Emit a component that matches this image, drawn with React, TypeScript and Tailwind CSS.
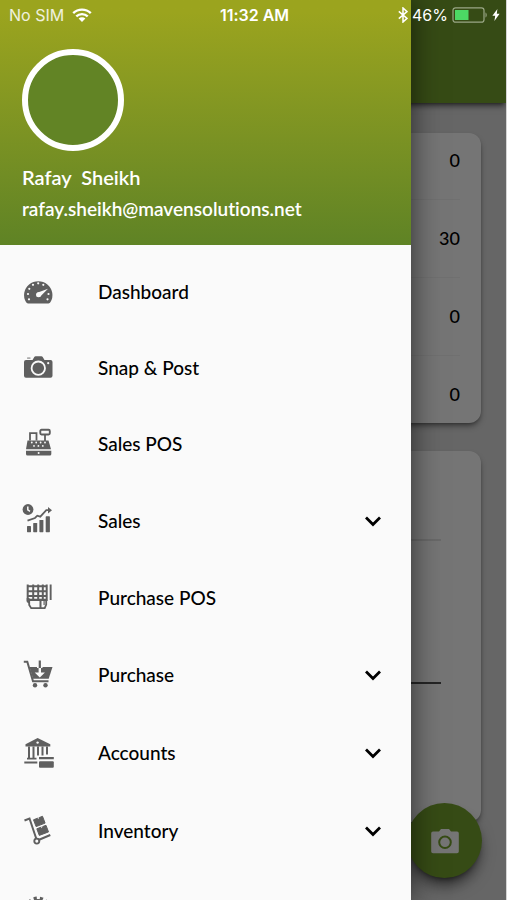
import { ChevronDown } from "lucide-react";
import type { ReactNode } from "react";

const stats = [0, 30, 0, 0];

const menu = [
  { label: "Dashboard", icon: <DashboardIcon /> },
  { label: "Snap & Post", icon: <CameraIcon /> },
  { label: "Sales POS", icon: <RegisterIcon /> },
  { label: "Sales", icon: <SalesIcon />, expandable: true },
  { label: "Purchase POS", icon: <TerminalIcon /> },
  { label: "Purchase", icon: <CartIcon />, expandable: true },
  { label: "Accounts", icon: <BankIcon />, expandable: true },
  { label: "Inventory", icon: <TrolleyIcon />, expandable: true },
];

export default function App() {
  return (
    <div className="relative h-screen overflow-hidden border-r border-neutral-300 bg-[#dedede] font-['Lato','Liberation_Sans',sans-serif] text-black [font-variant-ligatures:none]">
      <Home />
      <div className="absolute inset-0 bg-black/54" />
      <Drawer />
      <StatusBar />
    </div>
  );
}

function StatusBar() {
  return (
    <div className="absolute inset-x-0 top-0 flex h-[30px] items-center pr-1.5 pl-[9px] font-['Inter','Liberation_Sans',sans-serif] text-base text-white">
      <div className="flex flex-1 items-center gap-2 text-white/85">
        <span>No SIM</span>
        <svg viewBox="0 0 20 14" className="h-3.5 w-5" fill="none" stroke="#fff" strokeWidth="2.4">
          <path d="M1.2 5.2a12.6 12.6 0 0 1 17.6 0" />
          <path d="M4.3 8.4a8.2 8.2 0 0 1 11.4 0" />
          <path d="M10 14 6.6 10.6a4.9 4.9 0 0 1 6.8 0z" fill="#fff" stroke="none" />
        </svg>
      </div>
      <span className="font-semibold">11:32 AM</span>
      <div className="flex flex-1 items-center justify-end gap-1">
        <svg viewBox="0 0 10 16" className="h-4 w-2.5" fill="none" stroke="#fff" strokeWidth="1.5">
          <path d="M.8 4.4 9 11.4 5 15V1l4 3.6-8.2 7" />
        </svg>
        <span>46%</span>
        <svg viewBox="0 0 36 16" className="h-4 w-9">
          <rect x="1" y=".8" width="31" height="14.4" rx="2.5" fill="none" stroke="#9aa786" strokeWidth="1.2" />
          <rect x="3" y="3" width="13.5" height="10" fill="#4cd964" />
          <path d="M33.5 5.5c1.6.6 1.6 4.4 0 5z" fill="#9aa786" />
        </svg>
        <svg viewBox="0 0 8 12" className="h-3 w-2">
          <path d="M5.4 0 .4 6.8h2.8L2.4 12l5.2-7.2H4.8z" fill="#fff" />
        </svg>
      </div>
    </div>
  );
}

function Home() {
  return (
    <div className="flex h-full flex-col">
      <header className="h-[103px] shrink-0 bg-[#76a42e] shadow-md shadow-black/50" />
      <main className="flex flex-1 flex-col gap-7 px-[25px] pt-[30px] pb-[78px]">
        <ul className="rounded-xl bg-white px-[21px] shadow-md shadow-black/40">
          {stats.map((value, i) => (
            <li
              key={i}
              className="flex h-[78px] items-end justify-end border-b border-neutral-100 pb-[27px] text-lg/6 font-medium first:h-[67px] last:h-[67px] last:border-0 last:pb-[17px]"
            >
              {value}
            </li>
          ))}
        </ul>
        <section className="flex-1 rounded-xl bg-white px-10 shadow-md shadow-black/40">
          <div className="h-[90px] border-b-2 border-neutral-200" />
          <div className="h-[143px] border-b-2 border-neutral-600" />
        </section>
      </main>
      <button
        aria-label="Snap a receipt"
        className="absolute right-6 bottom-[22px] flex size-[75px] items-center justify-center rounded-full bg-[#76a42e] shadow-lg shadow-black/60"
      >
        <svg viewBox="0 0 28 26" className="h-[26px] w-7">
          <path
            d="M2 3.5h6L10 1h8l2 2.5h6a1.8 1.8 0 0 1 1.8 1.8v18.2a1.8 1.8 0 0 1-1.8 1.8H2A1.8 1.8 0 0 1 .2 23.5V5.3A1.8 1.8 0 0 1 2 3.5z"
            fill="#fff"
          />
          <circle cx="14" cy="14.3" r="5.8" fill="none" stroke="#76a42e" strokeWidth="2" />
        </svg>
      </button>
    </div>
  );
}

function Drawer() {
  return (
    <aside className="absolute inset-y-0 left-0 flex w-[calc(100%-95px)] flex-col bg-[#fafafa] shadow-[0_0_28px_rgba(0,0,0,0.6)]">
      <div className="bg-linear-to-b from-[#9ba41e] from-5% to-[#5f8325] px-[22px] pt-[49px] pb-5 font-semibold text-white">
        <div className="mb-2.5 size-[102px] rounded-full border-[6px] border-white bg-[#628425]" />
        <p className="text-xl/8 whitespace-pre">Rafay  Sheikh</p>
        <p className="text-[19px]/8">rafay.sheikh@mavensolutions.net</p>
      </div>
      <nav className="min-h-0 flex-1 overflow-hidden pt-[9px]">
        {menu.map((item) =>
          item.expandable ? (
            <button
              key={item.label}
              aria-expanded="false"
              className="flex h-[78px] w-full items-center gap-11 pr-6 pl-[22px] text-left text-[19px] font-medium"
            >
              {item.icon}
              <span className="flex-1">{item.label}</span>
              <ChevronDown size={28} strokeWidth={2.4} strokeLinecap="butt" strokeLinejoin="miter" />
            </button>
          ) : (
            <a key={item.label} href="#" className="flex h-[76px] items-center gap-11 pl-[22px] text-[19px] font-medium">
              {item.icon}
              <span>{item.label}</span>
            </a>
          ),
        )}
        <a href="#" aria-label="Settings" className="flex h-20 items-center pl-[22px]">
          <GearIcon />
        </a>
      </nav>
    </aside>
  );
}

function Icon({ children }: { children: ReactNode }) {
  return (
    <svg viewBox="0 0 32 32" className="size-8 shrink-0 overflow-visible" fill="#5f5f5f">
      {children}
    </svg>
  );
}

function DashboardIcon() {
  return (
    <Icon>
      <path d="M6 27.500a3 3 0 0 1-2-1.500A14.200 13.800 0 1 1 28.500 26 3 3 0 0 1 26.500 27.500z" />
      <g fill="#fafafa">
        <circle cx="6" cy="18" r="1.1" />
        <circle cx="7" cy="23.3" r="1.1" />
        <circle cx="7.3" cy="12.8" r="1.1" />
        <circle cx="11" cy="8.8" r="1.1" />
        <circle cx="16.2" cy="7.3" r="1.1" />
        <circle cx="21.3" cy="8.8" r="1.1" />
        <circle cx="26.5" cy="18" r="1.1" />
        <circle cx="25.5" cy="23.3" r="1.1" />
        <circle cx="16.5" cy="18.8" r="2.5" />
        <path d="M26 12.7 17.8 21 15.2 16.8z" />
      </g>
    </Icon>
  );
}

function CameraIcon() {
  return (
    <Icon>
      <path d="M4 8h6.5l1.8-3a1.5 1.5 0 0 1 1.3-.8h5.8a1.5 1.5 0 0 1 1.3.8l1.8 3h6a2 2 0 0 1 2 2v13.8a2 2 0 0 1-2 2H4a2 2 0 0 1-2-2V10a2 2 0 0 1 2-2z" />
      <rect x="5" y="5.3" width="3.6" height="1.6" rx=".6" fill="#aaa" />
      <circle cx="16.3" cy="16.2" r="6.7" fill="none" stroke="#fafafa" strokeWidth="1.8" />
      <circle cx="26.2" cy="11.2" r="1.1" fill="#fafafa" />
    </Icon>
  );
}

function RegisterIcon() {
  return (
    <Icon>
      <path d="M5.5 12.5h21l2.5 8.7H4z" />
      <path d="M4 22.8h25.3V26a1.5 1.5 0 0 1-1.5 1.5H5.5A1.5 1.5 0 0 1 4 26z" />
      <path d="M8 12.5V5.2h6.5v7.3M23 6.5V13" fill="none" stroke="#5f5f5f" strokeWidth="1.8" />
      <rect x="18.3" y="1.8" width="9.5" height="4.7" rx="1.2" fill="none" stroke="#5f5f5f" strokeWidth="1.9" />
      <g fill="#fafafa">
        <circle cx="9.8" cy="14.5" r=".9" />
        <circle cx="14.2" cy="14.5" r=".9" />
        <circle cx="18.6" cy="14.5" r=".9" />
        <circle cx="23" cy="14.5" r=".9" />
        <circle cx="12" cy="17.9" r=".9" />
        <circle cx="16.4" cy="17.9" r=".9" />
        <circle cx="20.8" cy="17.9" r=".9" />
        <circle cx="16.6" cy="25" r="1" />
      </g>
    </Icon>
  );
}

function SalesIcon() {
  return (
    <Icon>
      <circle cx="6" cy="4.5" r="5.4" />
      <path d="M5.8 1.5v3.4L8 6.300" fill="none" stroke="#fafafa" strokeWidth="1.5" />
      <path d="M5.5 15.7 13 13l2.3-2.3 3 1 6-6.500h3.500" fill="none" stroke="#5f5f5f" strokeWidth="1.8" />
      <path d="M26 2 30 5.300 26 8.500z" />
      <rect x="5" y="21" width="4" height="6.2" rx=".6" />
      <rect x="11.2" y="18" width="4" height="9.2" rx=".6" />
      <rect x="17.4" y="15" width="4" height="12.2" rx=".6" />
      <rect x="23.7" y="11.3" width="4.2" height="15.9" rx=".6" />
    </Icon>
  );
}

function TerminalIcon() {
  return (
    <Icon>
      <path
        d="M5.7 2.5V19M11.2 2.5V18M16.2 2.5V18M20.8 2.5V18M24.700 2.5V19M5 4.200h20.500M5 9.300h20.500M5 14h20.500M5 17.800h20.500"
        fill="none"
        stroke="#5f5f5f"
        strokeWidth="2"
      />
      <path d="M7.200 18h17v4.500l-1.500 3.700H9.200l-2-3.200z" fill="#fafafa" stroke="#5f5f5f" strokeWidth="1.8" />
      <path d="M4.700 16h2.800v6l-2.800-2zM17.500 18h2v8h-2zM21.500 18h1.200v5h-1.200z" />
      <rect x="27.7" y="2.5" width="1.9" height="15.5" />
    </Icon>
  );
}

function CartIcon() {
  return (
    <Icon>
      <path d="M1.8 2.700h3.500l5.700 19.500h15.500" fill="none" stroke="#5f5f5f" strokeWidth="2" />
      <path d="M7.500 8h23l-3.800 11.800H11z" />
      <path d="M15 6.500h5.500V9H15z" fill="#fafafa" />
      <rect x="16.700" y="1.500" width="2.200" height="7.500" />
      <path d="M16.600 9h2.400v4.600h3.900l-5.100 4.800-5.100-4.800h3.900z" fill="#fafafa" />
      <circle cx="13" cy="26.2" r="2.2" />
      <circle cx="23.5" cy="26.2" r="2.2" />
    </Icon>
  );
}

function BankIcon() {
  return (
    <Icon>
      <path d="M15.6 1 28.3 7.300v2.200H3.500V7.300z" />
      <circle cx="15.6" cy="5.6" r="1.2" fill="#fafafa" />
      <path d="M7 9.500v12M11.500 9.500v12M16 9.500v9M20.500 9.500v9M25 9.500v8" fill="none" stroke="#5f5f5f" strokeWidth="2" />
      <path d="M5 20.800h9.500v1.700H5zM2.300 24.500h13v2h-13zM17 20h14.800v2.200H17z" />
      <rect x="17" y="24.3" width="14.8" height="6.5" rx="1" />
    </Icon>
  );
}

function TrolleyIcon() {
  return (
    <Icon>
      <path d="M2.500 5.500 7.500 3.500l6.800 20.300M16.500 25 28.300 20" fill="none" stroke="#5f5f5f" strokeWidth="2" />
      <circle cx="14.8" cy="26.1" r="2.5" fill="none" stroke="#5f5f5f" strokeWidth="1.9" />
      <path d="m11.500 4.800 9-3.500 2.600 6.800-9 3.500zM14.800 13.800l9.200-3.500 2.500 6.600-9.200 3.500z" stroke="#5f5f5f" strokeLinejoin="round" />
      <path d="m15.500 2.700.8 1.600 1-2.300zM18.900 11.700l.8 1.600 1-2.300z" fill="#fafafa" />
    </Icon>
  );
}

function GearIcon() {
  return (
    <Icon>
      <circle cx="16" cy="16" r="8.500" fill="none" stroke="#5f5f5f" strokeWidth="5" />
      <circle cx="16" cy="16" r="11.500" fill="none" stroke="#5f5f5f" strokeWidth="4" strokeDasharray="3 3.020" strokeDashoffset="-1.500" />
    </Icon>
  );
}
